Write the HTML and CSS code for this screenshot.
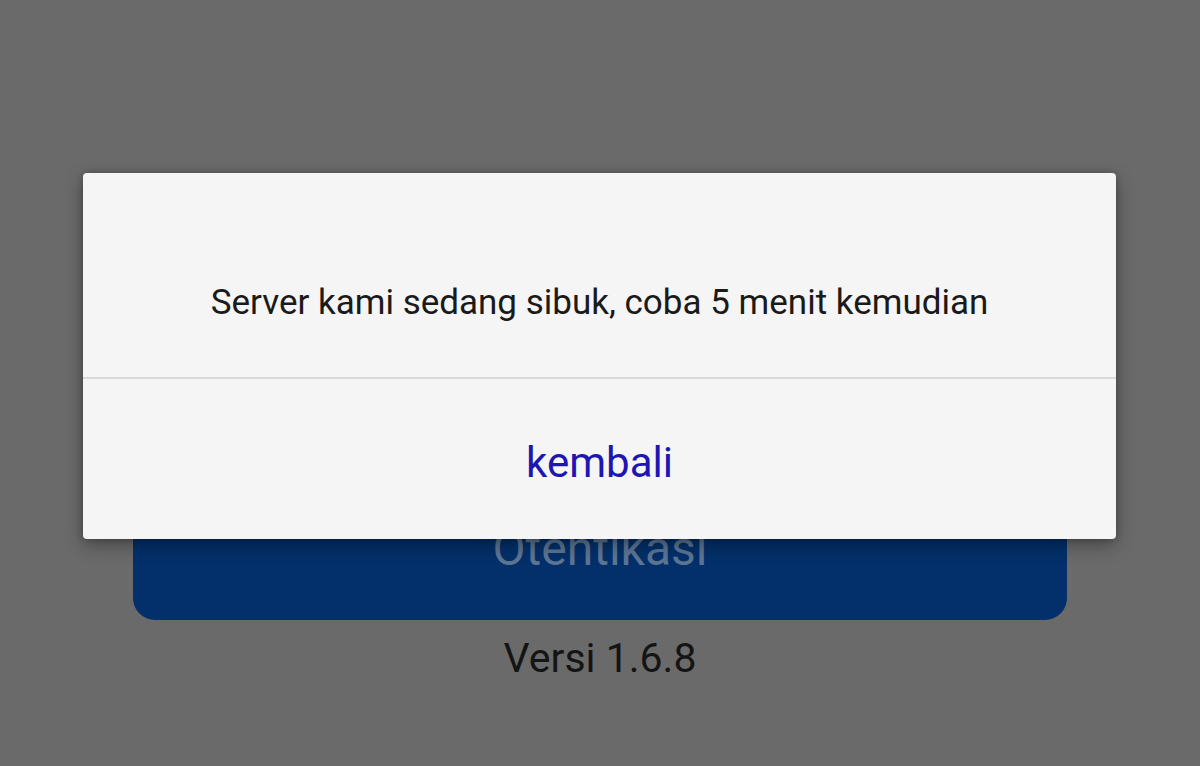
FILE: index.html
```html
<!DOCTYPE html>
<html lang="id">
<head>
<meta charset="utf-8">
<title>Otentikasi</title>
<link rel="stylesheet" href="styles.css">
</head>
<body>
<div class="screen">
  <div class="auth-btn">Otentikasi</div>
  <div class="version">Versi 1.6.8</div>
</div>
<div class="dialog">
  <div class="dialog-msg">Server kami sedang sibuk, coba 5 menit kemudian</div>
  <div class="dialog-divider"></div>
  <div class="dialog-action">kembali</div>
</div>
</body>
</html>
```
FILE: styles.css
```css
html, body {
  margin: 0;
  padding: 0;
}
body {
  width: 1200px;
  height: 766px;
  overflow: hidden;
  background: #6a6a6a;
  font-family: Roboto, "Liberation Sans", sans-serif;
  position: relative;
}
.screen {
  display: flex;
  flex-direction: column;
  align-items: stretch;
  padding: 476px 133px 0 133px;
}
.auth-btn {
  height: 144px;
  border-radius: 22px;
  background: #03306a;
  color: #5d7594;
  font-size: 48px;
  line-height: 56px;
  display: flex;
  align-items: center;
  justify-content: center;
  padding-top: 2px;
  box-sizing: border-box;
}
.version {
  margin-top: 14px;
  text-align: center;
  font-size: 41px;
  line-height: 48px;
  color: #141414;
}
.dialog {
  position: absolute;
  left: 83px;
  top: 173px;
  width: 1033px;
  height: 366px;
  background: #f5f5f5;
  border-radius: 4px;
  box-shadow: 0 6px 18px rgba(0, 0, 0, 0.35), 0 0 6px rgba(0, 0, 0, 0.2);
  display: flex;
  flex-direction: column;
}
.dialog-msg {
  height: 204px;
  box-sizing: border-box;
  padding-top: 109px;
  text-align: center;
  font-size: 35px;
  line-height: 42px;
  color: #1a1a1a;
}
.dialog-divider {
  height: 2px;
  background: #d9d9d9;
}
.dialog-action {
  flex: 1;
  box-sizing: border-box;
  padding-top: 61px;
  text-align: center;
  font-size: 42px;
  line-height: 46px;
  color: #1d16b2;
}
```
